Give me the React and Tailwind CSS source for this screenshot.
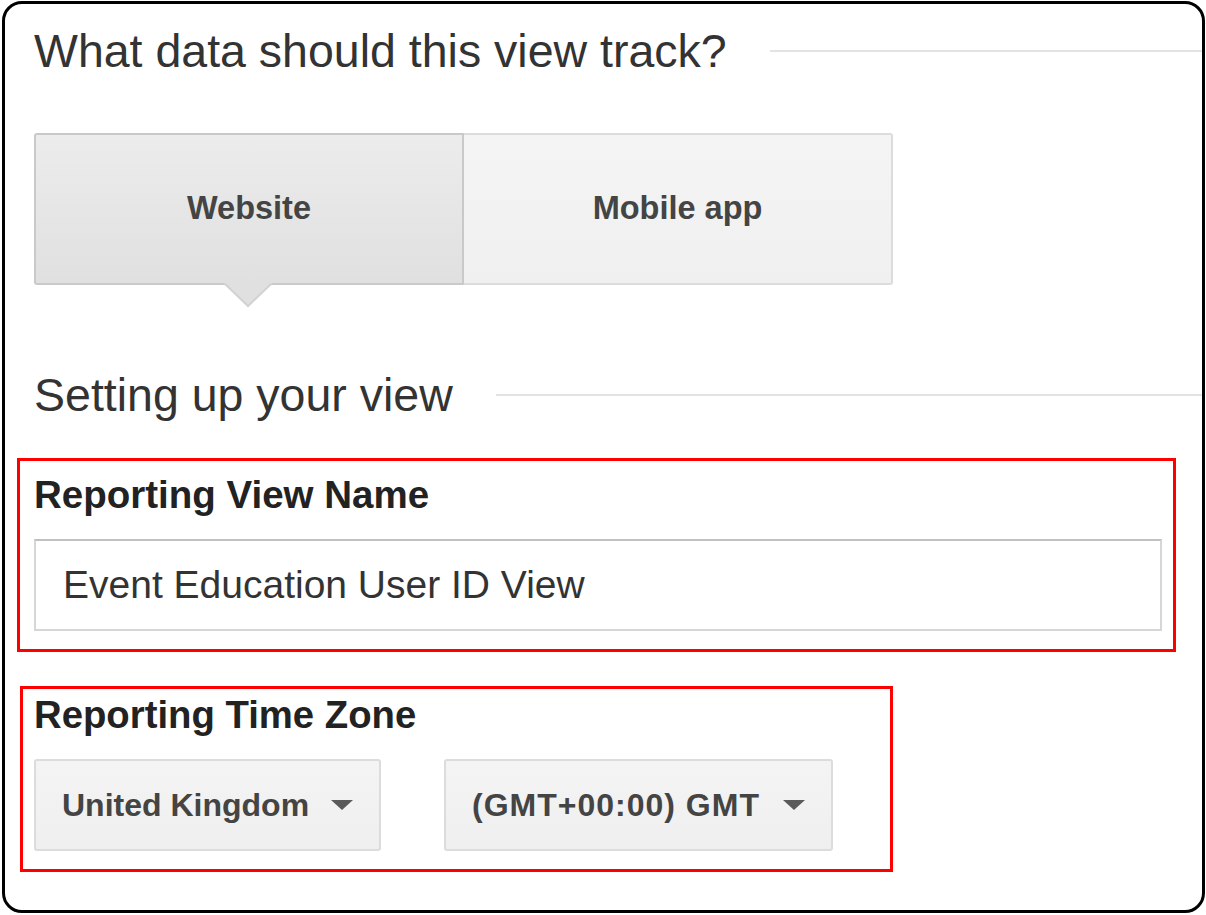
import React from 'react';

const Caret = () => (
  <svg width="22" height="10" viewBox="0 0 22 10" className="shrink-0">
    <polygon points="0,0 22,0 11,10" fill="#5a5a5a" />
  </svg>
);

const SectionHeading = ({ children }) => (
  <div className="flex items-center">
    <h2 className="text-[46.5px] leading-none font-normal text-[#333] whitespace-nowrap">{children}</h2>
    <div className="flex-1 h-[2px] bg-[#e3e3e3] ml-[43px]" />
  </div>
);

const Dropdown = ({ label, width, tracking = '' }) => (
  <div
    className={`${width} h-[92px] border-2 border-[#dcdcdc] rounded-[3px] bg-linear-to-b from-[#f4f4f4] to-[#efefef] flex items-center justify-between pl-[26px] pr-[26px]`}
  >
    <span className={`text-[32px] font-bold leading-none text-[#444] whitespace-nowrap ${tracking}`}>{label}</span>
    <Caret />
  </div>
);

export default function App() {
  return (
    <div className="w-[1206px] h-[915px] bg-white pt-[1px] pl-[2px]">
      <div className="w-[1203px] h-[912px] border-[3px] border-black rounded-[20px] overflow-hidden pt-[24px] pl-[29px] flex flex-col font-['Liberation_Sans',Arial,sans-serif]">
        <SectionHeading>What data should this view track?</SectionHeading>

        {/* Website / Mobile app toggle */}
        <div className="relative flex mt-[58px]">
          <div className="w-[430px] h-[152px] border-2 border-[#c9c9c9] rounded-l-[3px] bg-linear-to-b from-[#ececec] to-[#e0e0e0] flex items-center justify-center">
            <span className="text-[32.5px] font-bold leading-none text-[#444]">Website</span>
          </div>
          <div className="w-[429px] h-[152px] border-2 border-l-0 border-[#dcdcdc] rounded-r-[3px] bg-linear-to-b from-[#f4f4f4] to-[#f0f0f0] flex items-center justify-center">
            <span className="text-[32.5px] font-bold leading-none text-[#444]">Mobile app</span>
          </div>
          <svg width="48" height="25" viewBox="0 0 48 25" className="absolute left-[190px] top-[150px]">
            <polygon points="0,0 48,0 24,23" fill="#e0e0e0" />
            <polyline points="1,1 24,23 47,1" fill="none" stroke="#d2d2d2" strokeWidth="2" />
          </svg>
        </div>

        <div className="mt-[87px]">
          <SectionHeading>Setting up your view</SectionHeading>
        </div>

        {/* Reporting view name */}
        <div className="mt-[40px] ml-[-17px] w-[1159px] h-[194px] border-[3px] border-[#ff0000] pt-[15px] pl-[14px]">
          <div className="text-[38.5px] font-bold leading-none text-[#222]">Reporting View Name</div>
          <div className="mt-[24px] w-[1128px] h-[92px] border-2 border-[#d6d6d6] border-t-[#c0c0c0] bg-white flex items-center pl-[27px]">
            <span className="text-[39px] leading-none text-[#333]">Event Education User ID View</span>
          </div>
        </div>

        {/* Reporting time zone */}
        <div className="mt-[34px] ml-[-14px] w-[873px] h-[186px] border-[3px] border-[#ff0000] pt-[7px] pl-[11px]">
          <div className="text-[38.3px] font-bold leading-none text-[#222]">Reporting Time Zone</div>
          <div className="mt-[25px] flex gap-[63px]">
            <Dropdown label="United Kingdom" width="w-[347px]" />
            <Dropdown label="(GMT+00:00) GMT" width="w-[389px]" tracking="tracking-[1px]" />
          </div>
        </div>
      </div>
    </div>
  );
}
